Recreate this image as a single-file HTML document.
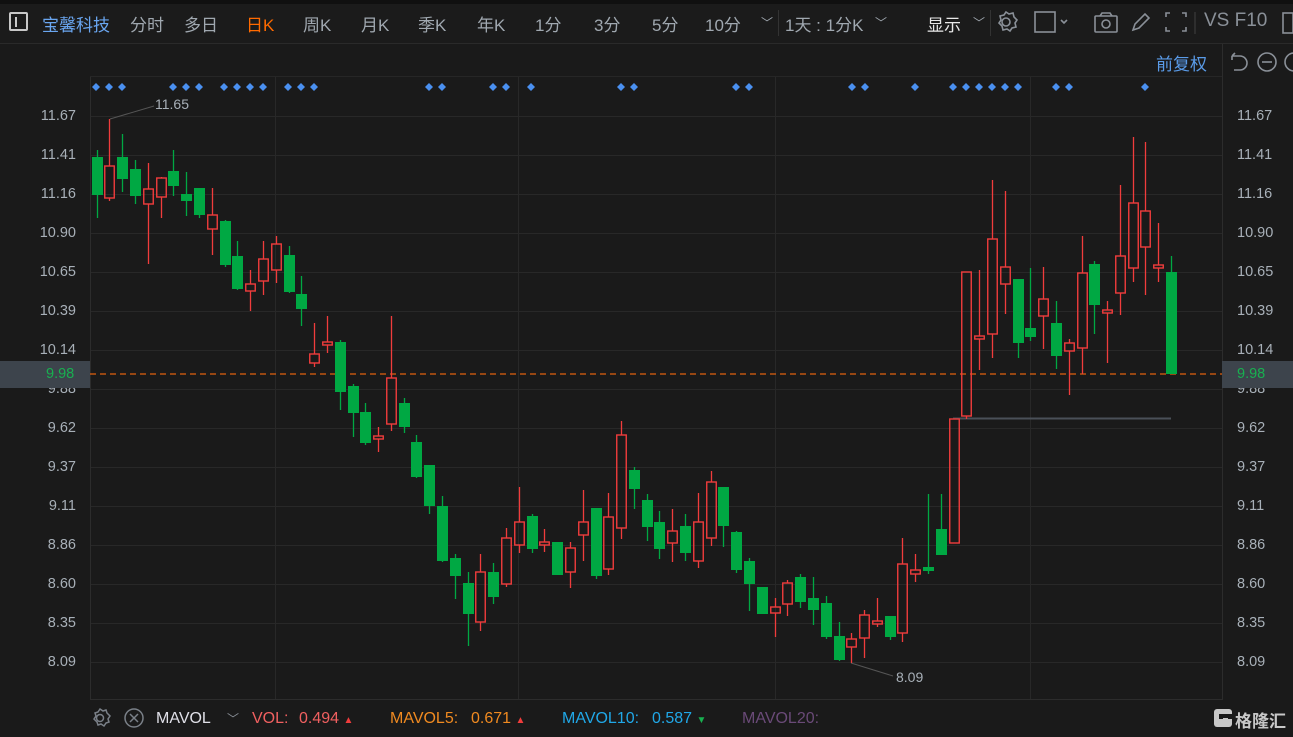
<!DOCTYPE html>
<html><head><meta charset="utf-8"><style>
*{margin:0;padding:0;box-sizing:border-box}
body{width:1293px;height:737px;background:#1a1a1a;overflow:hidden;position:relative;font-family:"Liberation Sans","Noto Sans CJK SC",sans-serif;color:#a8b0b8}
.t{position:absolute;white-space:nowrap}
#top{position:absolute;left:0;top:0;width:1293px;height:44px;background:#1b1b1b;border-top:4px solid #101010;border-bottom:1px solid #2a2a2a}
.m{position:absolute;top:7px;font-size:17px;color:#a0a8b0}
#la{position:absolute;left:0;top:0;width:1293px;height:737px;font-size:14.5px;color:#a8b0b8}
</style></head><body>
<div id="top">
<div style="position:absolute;left:9px;top:8px;width:19px;height:19px;border:2px solid #c8c8c8;border-radius:2px"><div style="position:absolute;left:4px;top:3px;width:2px;height:10px;background:#c8c8c8"></div></div>
<div class="m" style="left:42px;color:#6aa6f0">宝馨科技</div>
<div class="m" style="left:130px">分时</div>
<div class="m" style="left:184px">多日</div>
<div class="m" style="left:246px;color:#ff6a00">日K</div>
<div class="m" style="left:303px">周K</div>
<div class="m" style="left:361px">月K</div>
<div class="m" style="left:418px">季K</div>
<div class="m" style="left:477px">年K</div>
<div class="m" style="left:535px">1分</div>
<div class="m" style="left:594px">3分</div>
<div class="m" style="left:652px">5分</div>
<div class="m" style="left:705px">10分</div>
<div class="m" style="left:761px;font-size:12px;top:10px">﹀</div>
<div style="position:absolute;left:778px;top:6px;width:1px;height:26px;background:#333"></div>
<div class="m" style="left:785px">1天 : 1分K</div>
<div class="m" style="left:875px;font-size:12px;top:10px">﹀</div>
<div class="m" style="left:927px;color:#e8e8e8">显示</div>
<div class="m" style="left:973px;font-size:12px;top:10px">﹀</div>
<div style="position:absolute;left:990px;top:6px;width:1px;height:26px;background:#333"></div>
<svg style="position:absolute;left:995px;top:6px" width="298" height="30" fill="none" stroke="#8a9098" stroke-width="1.6">
<circle cx="11" cy="12" r="4"/><path d="M11 2l3 2 4-1 1 4 3 3-2 3 1 4-4 1-2 3-3-2-4 1-1-4-3-3 2-3-1-4 4-1z"/>
<rect x="40" y="2" width="20" height="20"/><path d="M66 10l3 3 3-3"/>
<rect x="100" y="6" width="22" height="16" rx="1"/><circle cx="111" cy="14" r="4"/><path d="M105 6l2-3h8l2 3"/>
<path d="M138 20l2-6 10-10 4 4-10 10z"/>
<path d="M175 3h-4v4M187 3h4v4M175 21h-4v-4M187 21h4v-4"/>
<line x1="200" y1="2" x2="200" y2="24" stroke="#333"/>
<rect x="288" y="3" width="10" height="20"/>
</svg>
<div class="m" style="left:1204px;font-size:19px;top:6px;color:#8a9098">VS F10</div>
</div>
<div class="t" style="left:1156px;top:50px;font-size:17px;color:#5a9be8">前复权</div>
<svg style="position:absolute;left:1226px;top:50px" width="67" height="26" fill="none" stroke="#8a9098" stroke-width="1.6">
<path d="M6 6h8a7 7 0 0 1 0 14h-6M6 6l3-3M6 6v4"/><circle cx="41" cy="12" r="9"/><path d="M36 12h10"/><circle cx="68" cy="12" r="9"/>
</svg>

<svg id="ch" style="position:absolute;left:0;top:0" width="1293" height="737"></svg>

<div id="la"></div>

<div style="position:absolute;left:0;top:361px;width:90px;height:27px;background:#3d444c"></div>
<div style="position:absolute;left:1222px;top:361px;width:71px;height:27px;background:#3d444c"></div>
<div class="t" style="left:46px;top:366px;font-size:14.5px;color:#18b050">9.98</div>
<div class="t" style="left:1237px;top:366px;font-size:14.5px;color:#18b050">9.98</div>
<div class="t" style="left:155px;top:96px;font-size:14px;color:#a8b0b8">11.65</div>
<div class="t" style="left:896px;top:669px;font-size:14px;color:#a8b0b8">8.09</div>

<svg style="position:absolute;left:88px;top:706px" width="60" height="26" fill="none" stroke="#7a8088" stroke-width="1.5">
<circle cx="12" cy="12" r="3.5"/><path d="M12 3l3 2 3-1 1 3 3 3-2 3 1 3-3 1-2 3-3-2-3 1-1-3-3-3 2-3-1-3 3-1z"/>
<circle cx="46" cy="12" r="9"/><path d="M42 8l8 8M50 8l-8 8"/>
</svg>
<div class="t" style="left:156px;top:710px;font-size:16px;color:#e0e0e8">MAVOL</div>
<div class="t" style="left:227px;top:710px;font-size:12px;color:#8a9098">﹀</div>
<div class="t" style="left:252px;top:710px;font-size:16px;color:#f06060">VOL:</div>
<div class="t" style="left:299px;top:710px;font-size:16px;color:#f06060">0.494 <span style="font-size:10px;color:#f03c3c">▲</span></div>
<div class="t" style="left:390px;top:710px;font-size:16px;color:#f08a20">MAVOL5:</div>
<div class="t" style="left:471px;top:710px;font-size:16px;color:#f08a20">0.671 <span style="font-size:10px;color:#f03c3c">▲</span></div>
<div class="t" style="left:562px;top:710px;font-size:16px;color:#20a8e8">MAVOL10:</div>
<div class="t" style="left:652px;top:710px;font-size:16px;color:#20a8e8">0.587 <span style="font-size:10px;color:#18b050">▼</span></div>
<div class="t" style="left:742px;top:710px;font-size:16px;color:#6a4a78">MAVOL20:</div>
<div style="position:absolute;left:1214px;top:709px;width:18px;height:18px;background:#c8c8c8;border-radius:3px"><div style="position:absolute;left:5px;top:5px;width:13px;height:5px;background:#1a1a1a"></div><div style="position:absolute;left:9px;top:9px;width:5px;height:5px;background:#c8c8c8"></div></div>
<div class="t" style="left:1235px;top:707px;font-size:17px;color:#c8c8c8;font-weight:bold">格隆汇</div>

<script>
var s='',ns='';
var ys=[116,155,194,233,272,311,350,389,428,467,506,545,584,623,662];
var lb=['11.67','11.41','11.16','10.90','10.65','10.39','10.14','9.88','9.62','9.37','9.11','8.86','8.60','8.35','8.09'];
ys.forEach(function(y,i){s+='<line x1="90" y1="'+(y+0.5)+'" x2="1222" y2="'+(y+0.5)+'" stroke="#282828"/>';
ns+='<div class="t" style="right:'+(1293-76)+'px;top:'+(y-8)+'px">'+lb[i]+'</div><div class="t" style="left:1237px;top:'+(y-8)+'px">'+lb[i]+'</div>';});
[275,518,775,1030].forEach(function(x){s+='<line x1="'+(x+0.5)+'" y1="76" x2="'+(x+0.5)+'" y2="700" stroke="#282828"/>';});
s+='<line x1="90.5" y1="76" x2="90.5" y2="700" stroke="#2c2c2c"/><line x1="1222.5" y1="44" x2="1222.5" y2="700" stroke="#2c2c2c"/><line x1="90" y1="699.5" x2="1222" y2="699.5" stroke="#2c2c2c"/><line x1="90" y1="76.5" x2="1222" y2="76.5" stroke="#262626"/>';
s+='<line x1="90" y1="374" x2="1222" y2="374" stroke="#e0600f" stroke-width="1.3" stroke-dasharray="6,4"/>';
s+='<line x1="953" y1="418.5" x2="1171" y2="418.5" stroke="#4a5058" stroke-width="2"/>';
s+='<line x1="110" y1="119" x2="154" y2="106" stroke="#555"/><line x1="851" y1="663" x2="893" y2="676" stroke="#555"/>';
var D=[['G',150,218,157,195],['R',119,201,166,198],['G',134,192,157,179],['G',160,204,169,196],['R',163,264,189,204],['R',177,218,178,197],['G',150,196,171,186],['G',172,216,194,201],['G',188,218,188,215],['R',188,255,215,229],
['G',220,267,221,265],['G',241,290,256,289],['R',270,311,284,291],['R',241,295,259,281],['R',236,283,244,270],['G',246,293,255,292],['G',276,326,294,309],['R',323,367,354,363],['R',316,353,342,345],['G',340,410,342,392],
['G',384,437,386,413],['G',403,445,412,443],['R',427,452,436,439],['R',316,431,378,424],['G',398,433,403,427],['G',435,478,442,477],['G',465,514,465,506],['G',496,562,506,561],['G',554,599,558,576],['G',572,646,583,614],
['R',554,631,572,622],['G',563,604,572,597],['R',528,587,538,584],['R',487,553,522,545],['G',514,553,516,549],['R',529,552,542,545],['G',542,575,542,575],['R',542,588,548,572],['R',490,561,522,535],['G',508,579,508,576],
['R',493,575,517,569],['R',421,539,435,528],['G',467,509,470,489],['G',494,541,500,527],['G',511,559,522,549],['R',509,562,531,543],['G',514,561,526,553],['R',493,568,522,561],['R',471,546,482,538],['G',487,547,487,526],
['G',531,573,532,570],['G',558,611,561,584],['G',587,614,587,614],['R',598,637,607,613],['R',580,616,583,604],['G',574,608,577,602],['G',577,625,598,610],['G',596,639,603,637],['G',622,661,636,660],['R',633,663,639,647],
['R',610,658,615,638],['R',598,627,621,624],['G',616,640,616,637],['R',538,642,564,633],['R',554,582,570,574],['G',494,574,567,571],['G',494,555,529,555],['R',419,543,419,543],['R',272,419,272,416],['R',270,370,336,339],
['R',180,358,239,334],['R',191,314,267,284],['G',279,358,279,343],['G',268,341,328,337],['R',267,349,299,316],['G',301,369,323,356],['R',339,395,343,351],['R',236,374,273,348],['G',261,334,264,305],['R',301,363,310,313],
['R',185,315,256,293],['R',137,282,203,268],['R',142,295,211,247],['R',223,282,265,268],['G',256,374,272,374]];
D.forEach(function(d,i){var x=Math.round(96.7+i*12.79)+0.5;
if(d[0]=='G'){s+='<line x1="'+x+'" y1="'+d[1]+'" x2="'+x+'" y2="'+d[2]+'" stroke="#00a843" stroke-width="1.3"/><rect x="'+(x-5.5)+'" y="'+d[3]+'" width="11" height="'+Math.max(2,d[4]-d[3])+'" fill="#00a843"/>';}
else{s+='<line x1="'+x+'" y1="'+d[1]+'" x2="'+x+'" y2="'+d[3]+'" stroke="#f03c3c" stroke-width="1.3"/><line x1="'+x+'" y1="'+d[4]+'" x2="'+x+'" y2="'+d[2]+'" stroke="#f03c3c" stroke-width="1.3"/><rect x="'+(x-4.75)+'" y="'+d[3]+'" width="9.5" height="'+Math.max(2,d[4]-d[3])+'" fill="none" stroke="#f03c3c" stroke-width="1.4"/>';}
});
[96,109,122,173,186,199,224,237,250,263,288,301,314,429,442,493,506,531,621,634,736,749,852,865,915,953,966,979,992,1005,1018,1056,1069,1145].forEach(function(x){
s+='<path d="M'+x+' 83l4 4-4 4-4-4z" fill="#4a90f0"/>';});
document.getElementById('ch').innerHTML=s;
document.getElementById('la').innerHTML=ns;
</script>
</body></html>
